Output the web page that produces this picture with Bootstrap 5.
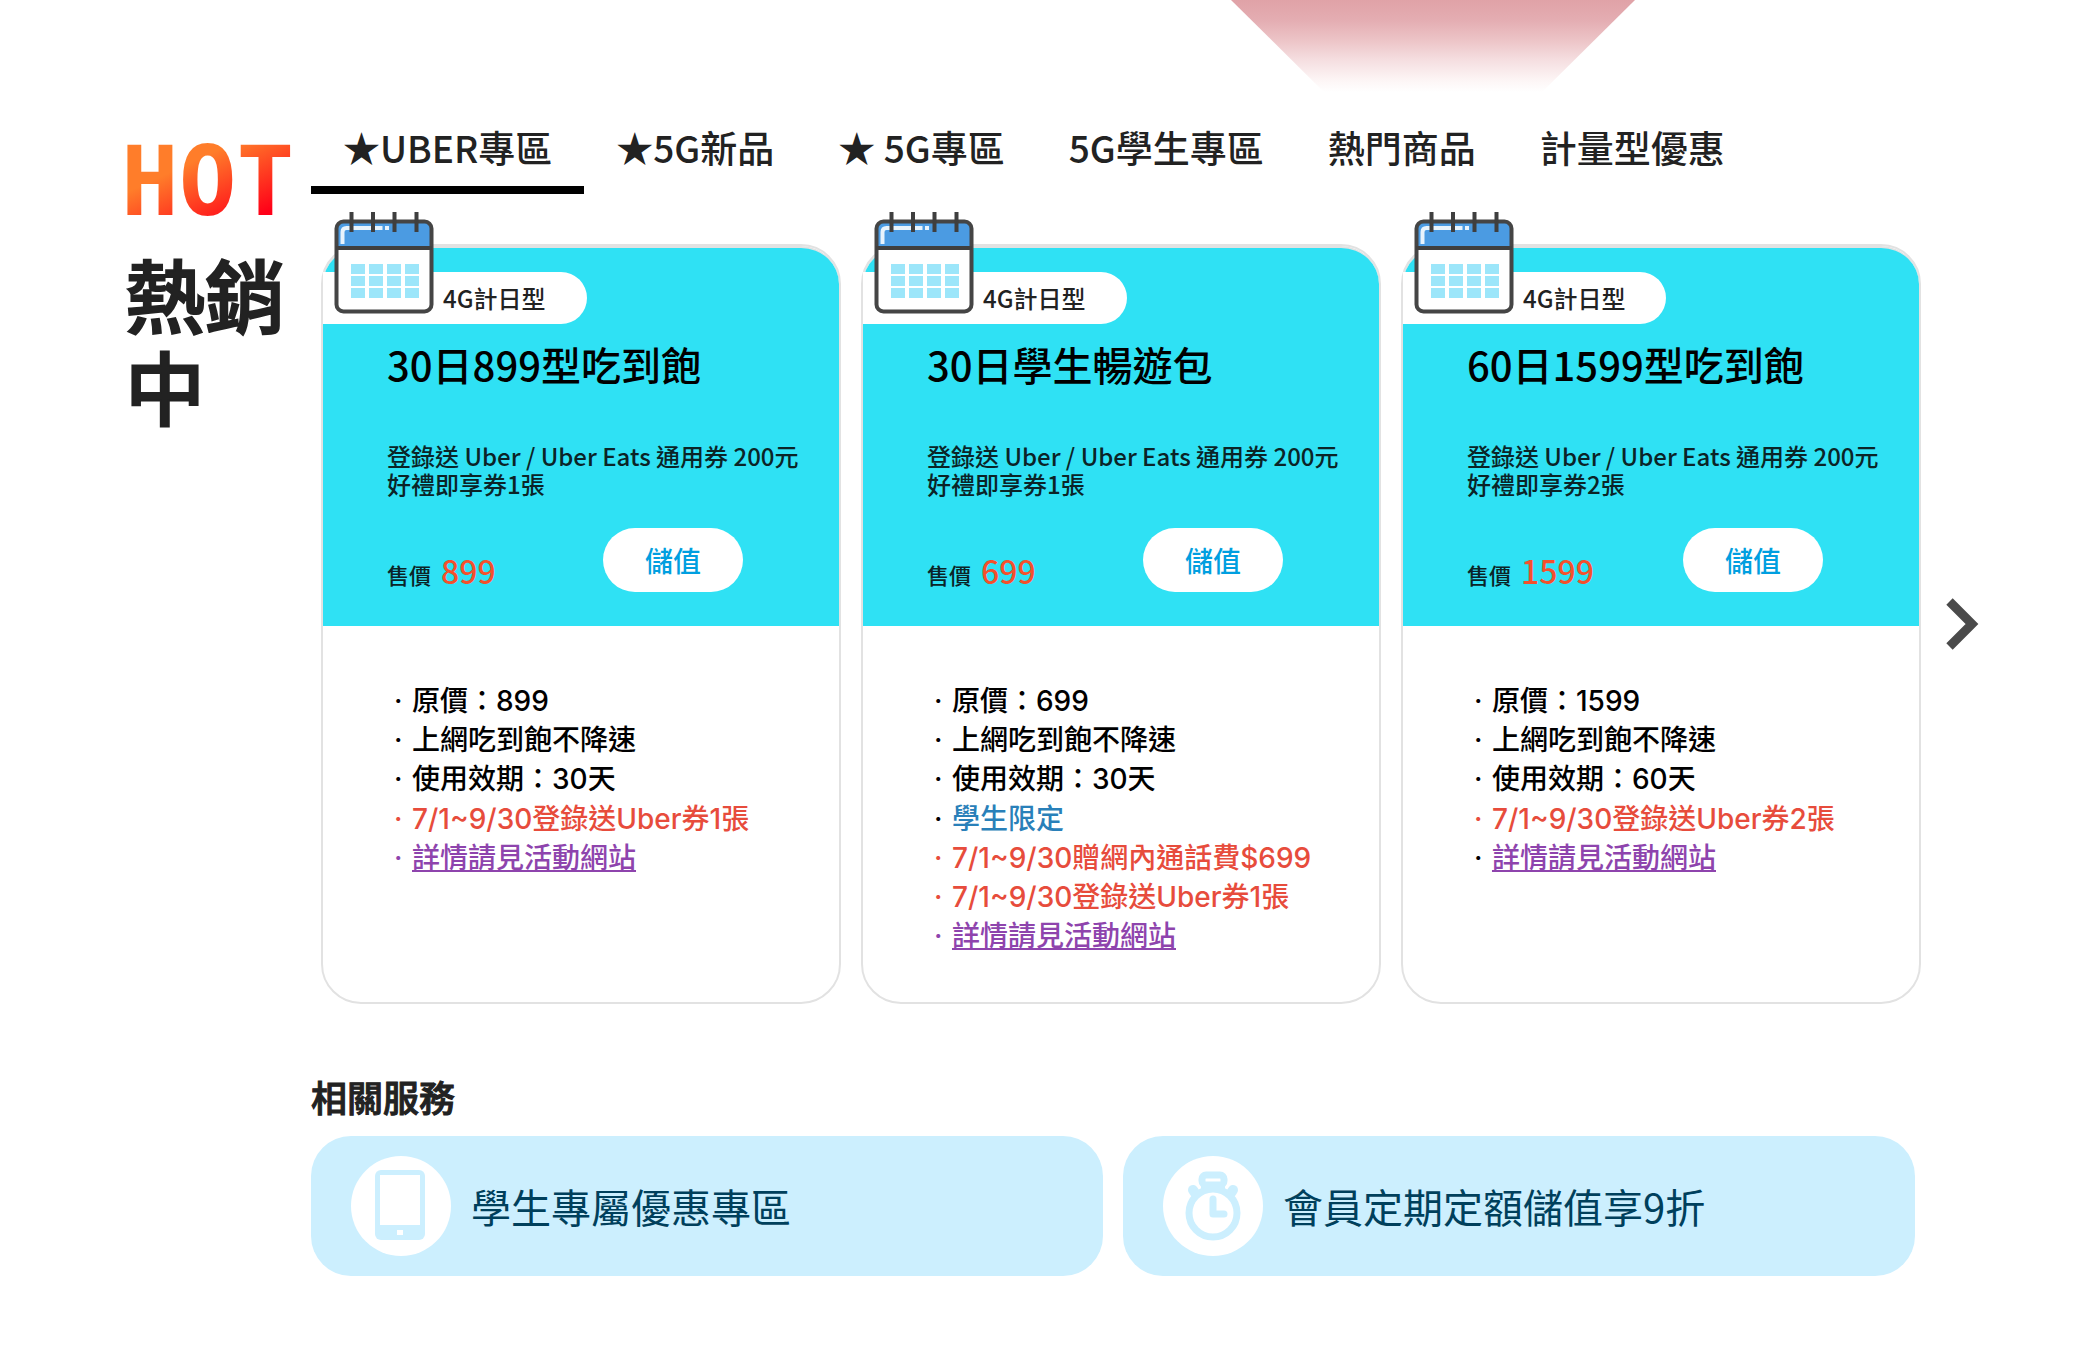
<!DOCTYPE html>
<html lang="zh-Hant">
<head>
<meta charset="utf-8">
<meta name="viewport" content="width=device-width, initial-scale=1">
<title>熱銷中</title>
<link href="https://cdn.jsdelivr.net/npm/bootstrap@5.3.0/dist/css/bootstrap.min.css" rel="stylesheet">
<style>
  body { font-family: "Noto Sans CJK TC", sans-serif; color: #222; background: #fff; }
  .page-wrap { padding: 0 120px 74px 125px; }
  .hero-tail { height: 92px; margin-left: 1231px; width: 404px;
    background: linear-gradient(#e0a2a7 0, #e4adb2 22%, #ecc3c6 43%, #f5dee0 65%, #fdf6f6 88%, #fff 100%);
    clip-path: polygon(0 0, 100% 0, 77% 100%, 23% 100%); }
  .side-title { width: 186px; padding-top: 37px; }
  .hot-logo { height: 107px; width: 176px; margin-left: -4px; font: 700 96px/107px "DejaVu Sans Mono", monospace;
    background: linear-gradient(155deg, #ff7d2a 35%, #ff0018 80%); -webkit-background-clip: text; background-clip: text; color: transparent; }
  .side-title h1 { font-size: 80px; line-height: 92px; font-weight: 500; margin-top: 10px; width: 166px; -webkit-text-stroke: 2px; }
  .plan-tabs .nav-link { font-size: 37px; line-height: 54px; font-weight: 500; color: #222; padding: 28px 32px 12px; border-bottom: 8px solid transparent; }
  .plan-tabs .nav-link.active { border-color: #000; }
  .services h2 { -webkit-text-stroke: 1px; }
  .plan-row { margin-top: 50px; }
  .plan-card { border: 2px solid #e2e2e2; border-radius: 40px; margin: 0 10px; height: 100%; }
  .plan-top { background: #2fe1f4; border-top: 2px solid #e2e2e2; border-radius: 38px 38px 0 0; padding-top: 24px; height: 380px; }
  .plan-tag { position: relative; background: #fff; border-radius: 0 26px 26px 0; padding: 0 41px 0 120px; font-size: 24px; line-height: 52px; font-weight: 500; }
  .plan-tag svg { position: absolute; left: 11px; top: -61px; }
  .plan-info { padding: 10px 0 0 64px; }
  .plan-info h2 { font-size: 40px; line-height: 60px; font-weight: 500; color: #000; margin-bottom: 48px; }
  .plan-info p { font-size: 24px; line-height: 28px; font-weight: 500; color: #0b2427; margin-bottom: 30px; }
  .plan-price { width: 216px; padding-top: 18px; font-size: 22px; line-height: 48px; font-weight: 500; color: #0b2427; }
  .plan-price span { font-size: 32px; color: #f4502c; margin-left: 10px; }
  .btn-topup { width: 140px; height: 64px; border-radius: 32px; background: #fff; color: #009fe0; font-size: 28px; font-weight: 500; }
  .plan-list { font-family: Inter, "Noto Sans CJK TC", sans-serif; font-size: 28px; line-height: 1.4; font-weight: 500; color: #000; padding: 56px 0 46px 71px; }
  .plan-list li { display: flex; }
  .plan-list i { font-style: normal; width: 18px; }
  .c-red { color: #e74c3c; } .c-blue { color: #2980b9; } .c-purple { color: #8e44ad; }
  .next-btn { width: 49px; }
  .services { padding-right: 65px; padding-top: 66px; }
  .services h2 { font-size: 36px; line-height: 52px; font-weight: 500; margin-bottom: 14px; }
  .svc-list { gap: 20px; }
  .svc-link { flex: 1; height: 140px; border-radius: 40px; background: #cceffe; padding: 0 40px; gap: 20px; font-size: 40px; color: #00405c; text-decoration: none; }
</style>
</head>
<body>
<svg width="0" height="0" class="position-absolute">
  <symbol id="calendar" viewBox="0 0 100 104">
    <rect x="2.500" y="10.500" width="95" height="90" rx="7" fill="#fff"/>
    <path d="M2.500 37V17.500a7 7 0 0 1 7-7h81a7 7 0 0 1 7 7V37z" fill="#4b9be2"/>
    <path d="M8.500 33V21q0-4 4-4h36M51 17h4" fill="none" stroke="#e8f3fc" stroke-width="4"/>
    <rect x="2.500" y="10.500" width="95" height="90" rx="7" fill="none" stroke="#454545" stroke-width="4"/>
    <path d="M2 37h96M17.500 1v20M39 1v20M60.500 1v20M82.500 1v20" fill="none" stroke="#3f3f3f" stroke-width="4"/>
    <path d="M17 53h14v10H17zM35 53h14v10H35zM53 53h14v10H53zM71 53h14v10H71zM17 65h14v10H17zM35 65h14v10H35zM53 65h14v10H53zM71 65h14v10H71zM17 77h14v10H17zM35 77h14v10H35zM53 77h14v10H53zM71 77h14v10H71z" fill="#9ce6fa"/>
  </symbol>
</svg>
<div class="hero-tail"></div>
<main class="page-wrap d-flex">
  <header class="side-title flex-shrink-0">
    <div class="hot-logo">HOT</div>
    <h1 class="mb-0">熱銷中</h1>
  </header>
  <div class="flex-grow-1">
    <nav class="nav plan-tabs">
      <a class="nav-link active" href="#">★UBER專區</a>
      <a class="nav-link" href="#">★5G新品</a>
      <a class="nav-link" href="#">★ 5G專區</a>
      <a class="nav-link" href="#">5G學生專區</a>
      <a class="nav-link" href="#">熱門商品</a>
      <a class="nav-link" href="#">計量型優惠</a>
    </nav>
    <div class="d-flex align-items-center plan-row">
      <div class="row g-0 flex-grow-1">
        <div class="col-4"><article class="plan-card">
          <div class="plan-top">
            <div class="plan-tag d-inline-block"><svg width="100" height="104"><use href="#calendar"/></svg>4G計日型</div>
            <div class="plan-info">
              <h2>30日899型吃到飽</h2>
              <p>登錄送 Uber / Uber Eats 通用券 200元<br>好禮即享券1張</p>
              <div class="d-flex"><div class="plan-price">售價<span>899</span></div><button class="btn btn-topup">儲值</button></div>
            </div>
          </div>
          <ul class="plan-list list-unstyled mb-0">
            <li><i>·</i>原價：899</li>
            <li><i>·</i>上網吃到飽不降速</li>
            <li><i>·</i>使用效期：30天</li>
            <li class="c-red"><i>·</i>7/1~9/30登錄送Uber券1張</li>
            <li class="c-purple"><i>·</i><a class="c-purple" href="#">詳情請見活動網站</a></li>
          </ul>
        </article></div>
        <div class="col-4"><article class="plan-card">
          <div class="plan-top">
            <div class="plan-tag d-inline-block"><svg width="100" height="104"><use href="#calendar"/></svg>4G計日型</div>
            <div class="plan-info">
              <h2>30日學生暢遊包</h2>
              <p>登錄送 Uber / Uber Eats 通用券 200元<br>好禮即享券1張</p>
              <div class="d-flex"><div class="plan-price">售價<span>699</span></div><button class="btn btn-topup">儲值</button></div>
            </div>
          </div>
          <ul class="plan-list list-unstyled mb-0">
            <li><i>·</i>原價：699</li>
            <li><i>·</i>上網吃到飽不降速</li>
            <li><i>·</i>使用效期：30天</li>
            <li><i>·</i><span class="c-blue">學生限定</span></li>
            <li class="c-red"><i>·</i>7/1~9/30贈網內通話費$699</li>
            <li class="c-red"><i>·</i>7/1~9/30登錄送Uber券1張</li>
            <li class="c-purple"><i>·</i><a class="c-purple" href="#">詳情請見活動網站</a></li>
          </ul>
        </article></div>
        <div class="col-4"><article class="plan-card">
          <div class="plan-top">
            <div class="plan-tag d-inline-block"><svg width="100" height="104"><use href="#calendar"/></svg>4G計日型</div>
            <div class="plan-info">
              <h2>60日1599型吃到飽</h2>
              <p>登錄送 Uber / Uber Eats 通用券 200元<br>好禮即享券2張</p>
              <div class="d-flex"><div class="plan-price">售價<span>1599</span></div><button class="btn btn-topup">儲值</button></div>
            </div>
          </div>
          <ul class="plan-list list-unstyled mb-0">
            <li><i>·</i>原價：1599</li>
            <li><i>·</i>上網吃到飽不降速</li>
            <li><i>·</i>使用效期：60天</li>
            <li class="c-red"><i>·</i>7/1~9/30登錄送Uber券2張</li>
            <li><i>·</i><a class="c-purple" href="#">詳情請見活動網站</a></li>
          </ul>
        </article></div>
      </div>
      <button class="btn p-0 border-0 next-btn flex-shrink-0 text-end" aria-label="下一頁"><svg width="34" height="52" viewBox="0 0 34 52"><path d="M3.500 3.500L26 26 3.500 48.500" fill="none" stroke="#4a4a4a" stroke-width="9"/></svg></button>
    </div>
    <section class="services">
      <h2>相關服務</h2>
      <div class="d-flex svc-list">
        <a class="svc-link d-flex align-items-center" href="#"><svg width="100" height="100"><circle cx="50" cy="50" r="50" fill="#fff"/><rect x="24" y="14" width="50" height="70" rx="6" fill="#cceffe"/><path d="M29 19h40v50H29zM46 74h6v5h-6z" fill="#fff"/></svg>學生專屬優惠專區</a>
        <a class="svc-link d-flex align-items-center" href="#"><svg width="100" height="100"><circle cx="50" cy="50" r="50" fill="#fff"/><path d="M38 26h24v10H38z" fill="#cceffe"/><rect x="39" y="19" width="22" height="10" rx="4" fill="#fff"/><g fill="none" stroke="#cceffe" stroke-width="7" stroke-linecap="round" stroke-linejoin="round"><circle cx="50" cy="57" r="24"/><rect x="39" y="19" width="22" height="10" rx="4"/><path d="M50 43v15h11"/><path d="M30 34l2 3M70 34l-2 3" stroke-width="10"/></g></svg>會員定期定額儲值享9折</a>
      </div>
    </section>
  </div>
</main>
<script src="https://cdn.jsdelivr.net/npm/bootstrap@5.3.0/dist/js/bootstrap.bundle.min.js"></script>
</body>
</html>
